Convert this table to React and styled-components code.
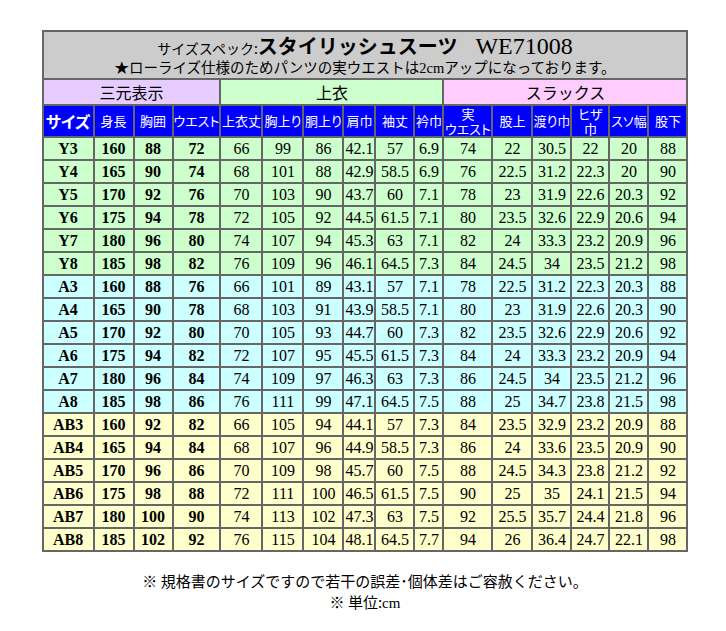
import React from 'react';
import styled, { createGlobalStyle } from 'styled-components';

const GlobalStyle = createGlobalStyle`
  body {
    margin: 0;
    background: #ffffff;
    font-family: "Noto Sans CJK JP", "Liberation Sans", sans-serif;
    color: #000000;
  }
`;

const widths = [49, 38, 37, 45, 40, 39, 38, 30, 37, 27, 47, 38, 37, 36, 37, 37];

const rowColors = {
  Y: '#ccffcc',
  A: '#ccffff',
  AB: '#ffffcc',
};

const rows = [
  ['Y', 'Y3', 160, 88, 72, 66, 99, 86, 42.1, 57, 6.9, 74, 22, 30.5, 22, 20, 88],
  ['Y', 'Y4', 165, 90, 74, 68, 101, 88, 42.9, 58.5, 6.9, 76, 22.5, 31.2, 22.3, 20, 90],
  ['Y', 'Y5', 170, 92, 76, 70, 103, 90, 43.7, 60, 7.1, 78, 23, 31.9, 22.6, 20.3, 92],
  ['Y', 'Y6', 175, 94, 78, 72, 105, 92, 44.5, 61.5, 7.1, 80, 23.5, 32.6, 22.9, 20.6, 94],
  ['Y', 'Y7', 180, 96, 80, 74, 107, 94, 45.3, 63, 7.1, 82, 24, 33.3, 23.2, 20.9, 96],
  ['Y', 'Y8', 185, 98, 82, 76, 109, 96, 46.1, 64.5, 7.3, 84, 24.5, 34, 23.5, 21.2, 98],
  ['A', 'A3', 160, 88, 76, 66, 101, 89, 43.1, 57, 7.1, 78, 22.5, 31.2, 22.3, 20.3, 88],
  ['A', 'A4', 165, 90, 78, 68, 103, 91, 43.9, 58.5, 7.1, 80, 23, 31.9, 22.6, 20.3, 90],
  ['A', 'A5', 170, 92, 80, 70, 105, 93, 44.7, 60, 7.3, 82, 23.5, 32.6, 22.9, 20.6, 92],
  ['A', 'A6', 175, 94, 82, 72, 107, 95, 45.5, 61.5, 7.3, 84, 24, 33.3, 23.2, 20.9, 94],
  ['A', 'A7', 180, 96, 84, 74, 109, 97, 46.3, 63, 7.3, 86, 24.5, 34, 23.5, 21.2, 96],
  ['A', 'A8', 185, 98, 86, 76, 111, 99, 47.1, 64.5, 7.5, 88, 25, 34.7, 23.8, 21.5, 98],
  ['AB', 'AB3', 160, 92, 82, 66, 105, 94, 44.1, 57, 7.3, 84, 23.5, 32.9, 23.2, 20.9, 88],
  ['AB', 'AB4', 165, 94, 84, 68, 107, 96, 44.9, 58.5, 7.3, 86, 24, 33.6, 23.5, 20.9, 90],
  ['AB', 'AB5', 170, 96, 86, 70, 109, 98, 45.7, 60, 7.5, 88, 24.5, 34.3, 23.8, 21.2, 92],
  ['AB', 'AB6', 175, 98, 88, 72, 111, 100, 46.5, 61.5, 7.5, 90, 25, 35, 24.1, 21.5, 94],
  ['AB', 'AB7', 180, 100, 90, 74, 113, 102, 47.3, 63, 7.5, 92, 25.5, 35.7, 24.4, 21.8, 96],
  ['AB', 'AB8', 185, 102, 92, 76, 115, 104, 48.1, 64.5, 7.7, 94, 26, 36.4, 24.7, 22.1, 98],
];

const headers = [
  ['サイズ'], ['身長'], ['胸囲'], ['ウエスト'], ['上衣丈'], ['胸上り'], ['胴上り'], ['肩巾'],
  ['袖丈'], ['衿巾'], ['実', 'ウエスト'], ['股上'], ['渡り巾'], ['ヒザ', '巾'], ['スソ幅'], ['股下'],
];

const Page = styled.div`
  padding: 30px 0 0 4px;
  display: flex;
  flex-direction: column;
  align-items: center;
`;

const Table = styled.table`
  table-layout: fixed;
  border-collapse: separate;
  border-spacing: 2px;
  background: #666666;

  td {
    padding: 0;
    text-align: center;
  }
`;

const TitleCell = styled.td`
  background: #cccccc;
  height: 46px;
`;

const TitleLine = styled.div`
  height: 26px;
  line-height: 28px;
  white-space: nowrap;
`;

const SpecLabel = styled.span`
  font-size: 14px;
`;

const ProductName = styled.span`
  font-size: 20px;
  font-weight: bold;
`;

const ModelNo = styled.span`
  font-family: "Liberation Serif", serif;
  font-size: 24px;
  margin-left: 18px;
`;

const NoteLine = styled.div`
  height: 20px;
  line-height: 18px;
  font-size: 14.5px;
  white-space: nowrap;
`;

const Serif = styled.span`
  font-family: "Liberation Serif", serif;
`;

const SectionCell = styled.td`
  background: ${p => p.$bg};
  height: 24px;
  font-size: 16px;
  line-height: 24px;
`;

const HeadCell = styled.td`
  background: #0000ff;
  color: #ffffff;
  height: 30px;
  font-size: ${p => (p.$big ? '16px' : '13px')};
  font-weight: ${p => (p.$big ? 'bold' : 'normal')};
  line-height: ${p => (p.$stack ? '15px' : '30px')};
  font-feature-settings: "palt";
  white-space: nowrap;
`;

const DataCell = styled.td`
  background: ${p => p.$bg};
  height: 21px;
  font-family: "Liberation Serif", serif;
  font-size: 16px;
  line-height: 21px;
  font-weight: ${p => (p.$bold ? 'bold' : 'normal')};
  white-space: nowrap;
`;

const Footer = styled.div`
  margin-top: 18px;
  text-align: center;
  font-size: 15px;
  line-height: 21px;
`;

export default function App() {
  return (
    <>
      <GlobalStyle />
      <Page>
        <Table>
          <colgroup>
            {widths.map((w, i) => (
              <col key={i} style={{ width: w }} />
            ))}
          </colgroup>
          <tbody>
            <tr>
              <TitleCell colSpan={16}>
                <TitleLine>
                  <SpecLabel>サイズスペック:</SpecLabel>
                  <ProductName>スタイリッシュスーツ</ProductName>
                  <ModelNo>WE71008</ModelNo>
                </TitleLine>
                <NoteLine>
                  ★ローライズ仕様のためパンツの実ウエストは<Serif>2cm</Serif>アップになっております。
                </NoteLine>
              </TitleCell>
            </tr>
            <tr>
              <SectionCell colSpan={4} $bg="#e6ccff">三元表示</SectionCell>
              <SectionCell colSpan={6} $bg="#ccffcc">上衣</SectionCell>
              <SectionCell colSpan={6} $bg="#ffccff">スラックス</SectionCell>
            </tr>
            <tr>
              {headers.map((h, i) => (
                <HeadCell key={i} $big={i === 0} $stack={h.length > 1}>
                  {h.map((line, j) => (
                    <div key={j}>{line}</div>
                  ))}
                </HeadCell>
              ))}
            </tr>
            {rows.map(([group, ...cells]) => (
              <tr key={cells[0]}>
                {cells.map((v, i) => (
                  <DataCell key={i} $bg={rowColors[group]} $bold={i < 4}>
                    {v}
                  </DataCell>
                ))}
              </tr>
            ))}
          </tbody>
        </Table>
        <Footer>
          <div>※ 規格書のサイズですので若干の誤差･個体差はご容赦ください。</div>
          <div>
            ※ 単位:<Serif>cm</Serif>
          </div>
        </Footer>
      </Page>
    </>
  );
}
